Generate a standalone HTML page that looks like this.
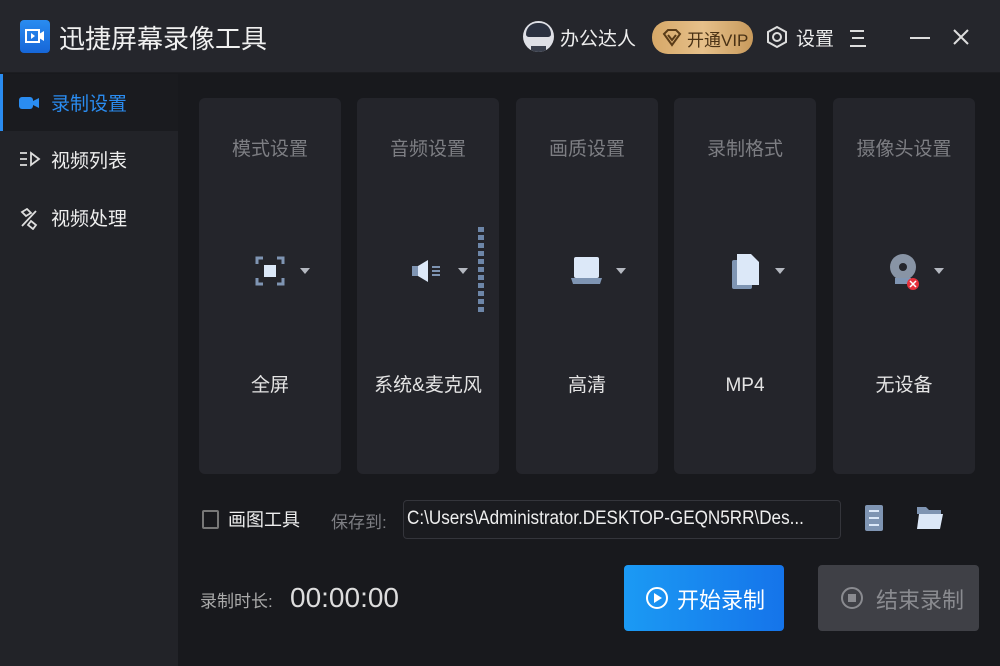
<!DOCTYPE html>
<html><head><meta charset="utf-8"><style>
*{margin:0;padding:0;box-sizing:border-box}
body{width:1000px;height:666px;background:#18191d;font-family:"Liberation Sans","Noto Sans CJK SC",sans-serif;position:relative;overflow:hidden;color:#e6e6e6}
.abs{position:absolute}
.top{left:0;top:0;width:1000px;height:73px;background:#25262c;border-bottom:1px solid #1c1d21}
.side{left:0;top:74px;width:178px;height:592px;background:#222328}
.card{position:absolute;top:98px;width:142px;height:376px;background:#24252b;border-radius:6px}
.card .t{position:absolute;top:36px;width:100%;text-align:center;font-size:19px;color:#7d7e83}
.card .l{position:absolute;top:272px;width:100%;text-align:center;font-size:19px;color:#e4e4e4}
.tri{position:absolute;width:0;height:0;border-left:5px solid transparent;border-right:5px solid transparent;border-top:6px solid #b4b8c0}
</style></head><body>
<div class="abs top"></div>
<div class="abs" style="left:20px;top:20px;width:30px;height:33px;border-radius:4px;background:linear-gradient(#2a8cf0,#1666d8)"></div>
<svg class="abs" style="left:24px;top:27px" width="22" height="18"><rect x="2" y="3" width="13" height="12" fill="none" stroke="#fff" stroke-width="2"/><path d="M7 6v6l4-3z" fill="#fff"/><path d="M15 7l5-3v10l-5-3z" fill="#fff"/></svg>
<div class="abs" style="left:59px;top:19px;font-size:26px;color:#f0f0f0">迅捷屏幕录像工具</div>
<div class="abs" style="left:523px;top:21px;width:31px;height:31px;border-radius:50%;background:#dfe0e6;overflow:hidden"><div style="position:absolute;left:3px;top:2px;width:25px;height:14px;background:#2b3140;border-radius:12px 12px 3px 3px"></div><div style="position:absolute;left:8px;top:25px;width:15px;height:8px;background:#3a3f4c"></div></div>
<div class="abs" style="left:560px;top:24px;font-size:19px;color:#eee">办公达人</div>
<div class="abs" style="left:652px;top:21px;width:101px;height:33px;border-radius:16px;background:linear-gradient(90deg,#d6a868,#e6c08a,#c89a5c)"></div>
<svg class="abs" style="left:662px;top:28px" width="20" height="20"><path d="M2 6l4-4h8l4 4-8 11z" fill="none" stroke="#5a3c18" stroke-width="2"/><path d="M6 7l4 5 4-5" fill="none" stroke="#5a3c18" stroke-width="2"/></svg>
<div class="abs" style="left:687px;top:26px;font-size:17px;color:#4a3215">开通VIP</div>
<svg class="abs" style="left:766px;top:25px" width="22" height="24"><path d="M11 2l9 5v10l-9 5-9-5V7z" fill="none" stroke="#ddd" stroke-width="2"/><circle cx="11" cy="12" r="4" fill="none" stroke="#ddd" stroke-width="2"/></svg>
<div class="abs" style="left:796px;top:24px;font-size:19px;color:#eee">设置</div>
<svg class="abs" style="left:848px;top:29px" width="20" height="20"><path d="M2 2h14M4 9h12M2 17h16" stroke="#ddd" stroke-width="2"/></svg>
<div class="abs" style="left:910px;top:37px;width:20px;height:2px;background:#ddd"></div>
<svg class="abs" style="left:952px;top:28px" width="18" height="18"><path d="M2 2l14 14M16 2L2 16" stroke="#ddd" stroke-width="2"/></svg>

<div class="abs side"></div>
<div class="abs" style="left:0;top:74px;width:178px;height:57px;background:#1a1b1f"></div>
<div class="abs" style="left:0;top:74px;width:3px;height:57px;background:#2a8cf0"></div>
<svg class="abs" style="left:19px;top:96px" width="22" height="14"><rect x="0" y="1" width="14" height="12" rx="3" fill="#2a8cf0"/><path d="M14 5l6-3v10l-6-3z" fill="#2a8cf0"/></svg>
<div class="abs" style="left:51px;top:89px;font-size:19px;color:#2a8cf0">录制设置</div>
<svg class="abs" style="left:19px;top:151px" width="22" height="16"><path d="M1 2h7M1 8h7M1 14h7M12 2l8 6-8 6z" fill="none" stroke="#ddd" stroke-width="1.8"/></svg>
<div class="abs" style="left:51px;top:146px;font-size:19px;color:#eee">视频列表</div>
<svg class="abs" style="left:19px;top:208px" width="20" height="22"><path d="M3 4l5-3 4 4-5 3zM12 13l5 4-3 4-5-4zM3 18L17 3" fill="none" stroke="#ddd" stroke-width="1.8"/></svg>
<div class="abs" style="left:51px;top:204px;font-size:19px;color:#eee">视频处理</div>

<div class="card" style="left:199px"><div class="t">模式设置</div><div class="l">全屏</div></div>
<div class="card" style="left:357px"><div class="t">音频设置</div><div class="l">系统&amp;麦克风</div></div>
<div class="card" style="left:516px"><div class="t">画质设置</div><div class="l">高清</div></div>
<div class="card" style="left:674px"><div class="t">录制格式</div><div class="l" style="top:277px">MP4</div></div>
<div class="card" style="left:833px"><div class="t">摄像头设置</div><div class="l">无设备</div></div>

<svg class="abs" style="left:255px;top:256px" width="30" height="30"><path d="M2 8V2h6M22 2h6v6M28 22v6h-6M8 28H2v-6" fill="none" stroke="#7f95b3" stroke-width="3"/><rect x="9" y="9" width="12" height="12" fill="#dce8f8"/></svg>
<div class="tri" style="left:300px;top:268px"></div>
<svg class="abs" style="left:410px;top:258px" width="38" height="26"><rect x="2" y="8" width="6" height="10" fill="#7f95b3"/><path d="M8 8l10-6v22l-10-6z" fill="#dce8f8"/><path d="M22 9h8M22 13h8M22 17h8" stroke="#7f95b3" stroke-width="2"/></svg>
<div class="tri" style="left:458px;top:268px"></div>
<svg class="abs" style="left:477px;top:226px" width="8" height="90"><g fill="#6d86a8"><rect x="1" y="1" width="6" height="5"/><rect x="1" y="9" width="6" height="5"/><rect x="1" y="17" width="6" height="5"/><rect x="1" y="25" width="6" height="5"/><rect x="1" y="33" width="6" height="5"/><rect x="1" y="41" width="6" height="5"/><rect x="1" y="49" width="6" height="5"/><rect x="1" y="57" width="6" height="5"/><rect x="1" y="65" width="6" height="5"/><rect x="1" y="73" width="6" height="5"/><rect x="1" y="81" width="6" height="5"/></g></svg>
<svg class="abs" style="left:569px;top:256px" width="36" height="32"><rect x="5" y="1" width="25" height="21" rx="2" fill="#dce8f8"/><path d="M2 22h31l-2 6H4z" fill="#7f95b3"/></svg>
<div class="tri" style="left:616px;top:268px"></div>
<svg class="abs" style="left:731px;top:253px" width="30" height="38"><rect x="1" y="7" width="20" height="29" rx="2" fill="#7f95b3"/><path d="M6 1h14l8 8v23H6z" fill="#dce8f8"/></svg>
<div class="tri" style="left:775px;top:268px"></div>
<svg class="abs" style="left:889px;top:252px" width="32" height="40"><circle cx="14" cy="15" r="13" fill="#8894a5"/><circle cx="14" cy="15" r="4" fill="#24252b"/><path d="M6 26h16v6H6z" fill="#7f95b3"/><circle cx="24" cy="32" r="6" fill="#e6313c"/><path d="M21 29l6 6M27 29l-6 6" stroke="#fff" stroke-width="1.5"/></svg>
<div class="tri" style="left:934px;top:268px"></div>

<div class="abs" style="left:202px;top:510px;width:17px;height:19px;border:2px solid #777;border-radius:2px"></div>
<div class="abs" style="left:228px;top:506px;font-size:18px;color:#eee">画图工具</div>
<div class="abs" style="left:331px;top:508px;font-size:17px;color:#7d7e83">保存到:</div>
<div class="abs" style="left:403px;top:500px;width:438px;height:39px;border:1px solid #34353b;border-radius:4px;background:#1a1b1f"></div>
<div class="abs" style="left:407px;top:508px;font-size:19px;color:#eee;white-space:nowrap;transform:scaleX(0.9);transform-origin:left">C:\Users\Administrator.DESKTOP-GEQN5RR\Des...</div>
<svg class="abs" style="left:864px;top:504px" width="20" height="28"><rect x="1" y="1" width="18" height="26" rx="2" fill="#7f95b3"/><path d="M5 7h10M5 14h10M5 21h10" stroke="#dce8f8" stroke-width="2"/></svg>
<svg class="abs" style="left:916px;top:504px" width="28" height="26"><path d="M1 3h9l3 3h12v4H1z" fill="#7f95b3"/><path d="M3 10h24l-3 15H1z" fill="#dce8f8"/></svg>

<div class="abs" style="left:200px;top:587px;font-size:17px;color:#aaa">录制时长:</div>
<div class="abs" style="left:290px;top:582px;font-size:28px;color:#ddd">00:00:00</div>
<div class="abs" style="left:624px;top:565px;width:160px;height:66px;border-radius:4px;background:linear-gradient(90deg,#1b9af4,#1574ea)"></div>
<svg class="abs" style="left:645px;top:586px" width="24" height="24"><circle cx="12" cy="12" r="10" fill="none" stroke="#fff" stroke-width="2"/><path d="M9 7v10l8-5z" fill="#fff"/></svg>
<div class="abs" style="left:677px;top:583px;font-size:22px;color:#fff">开始录制</div>
<div class="abs" style="left:818px;top:565px;width:161px;height:66px;border-radius:4px;background:#3f4046"></div>
<svg class="abs" style="left:840px;top:586px" width="24" height="24"><circle cx="12" cy="12" r="10" fill="none" stroke="#8a8b90" stroke-width="2"/><rect x="8" y="8" width="8" height="8" fill="#8a8b90"/></svg>
<div class="abs" style="left:876px;top:583px;font-size:22px;color:#8a8b90">结束录制</div>
</body></html>
